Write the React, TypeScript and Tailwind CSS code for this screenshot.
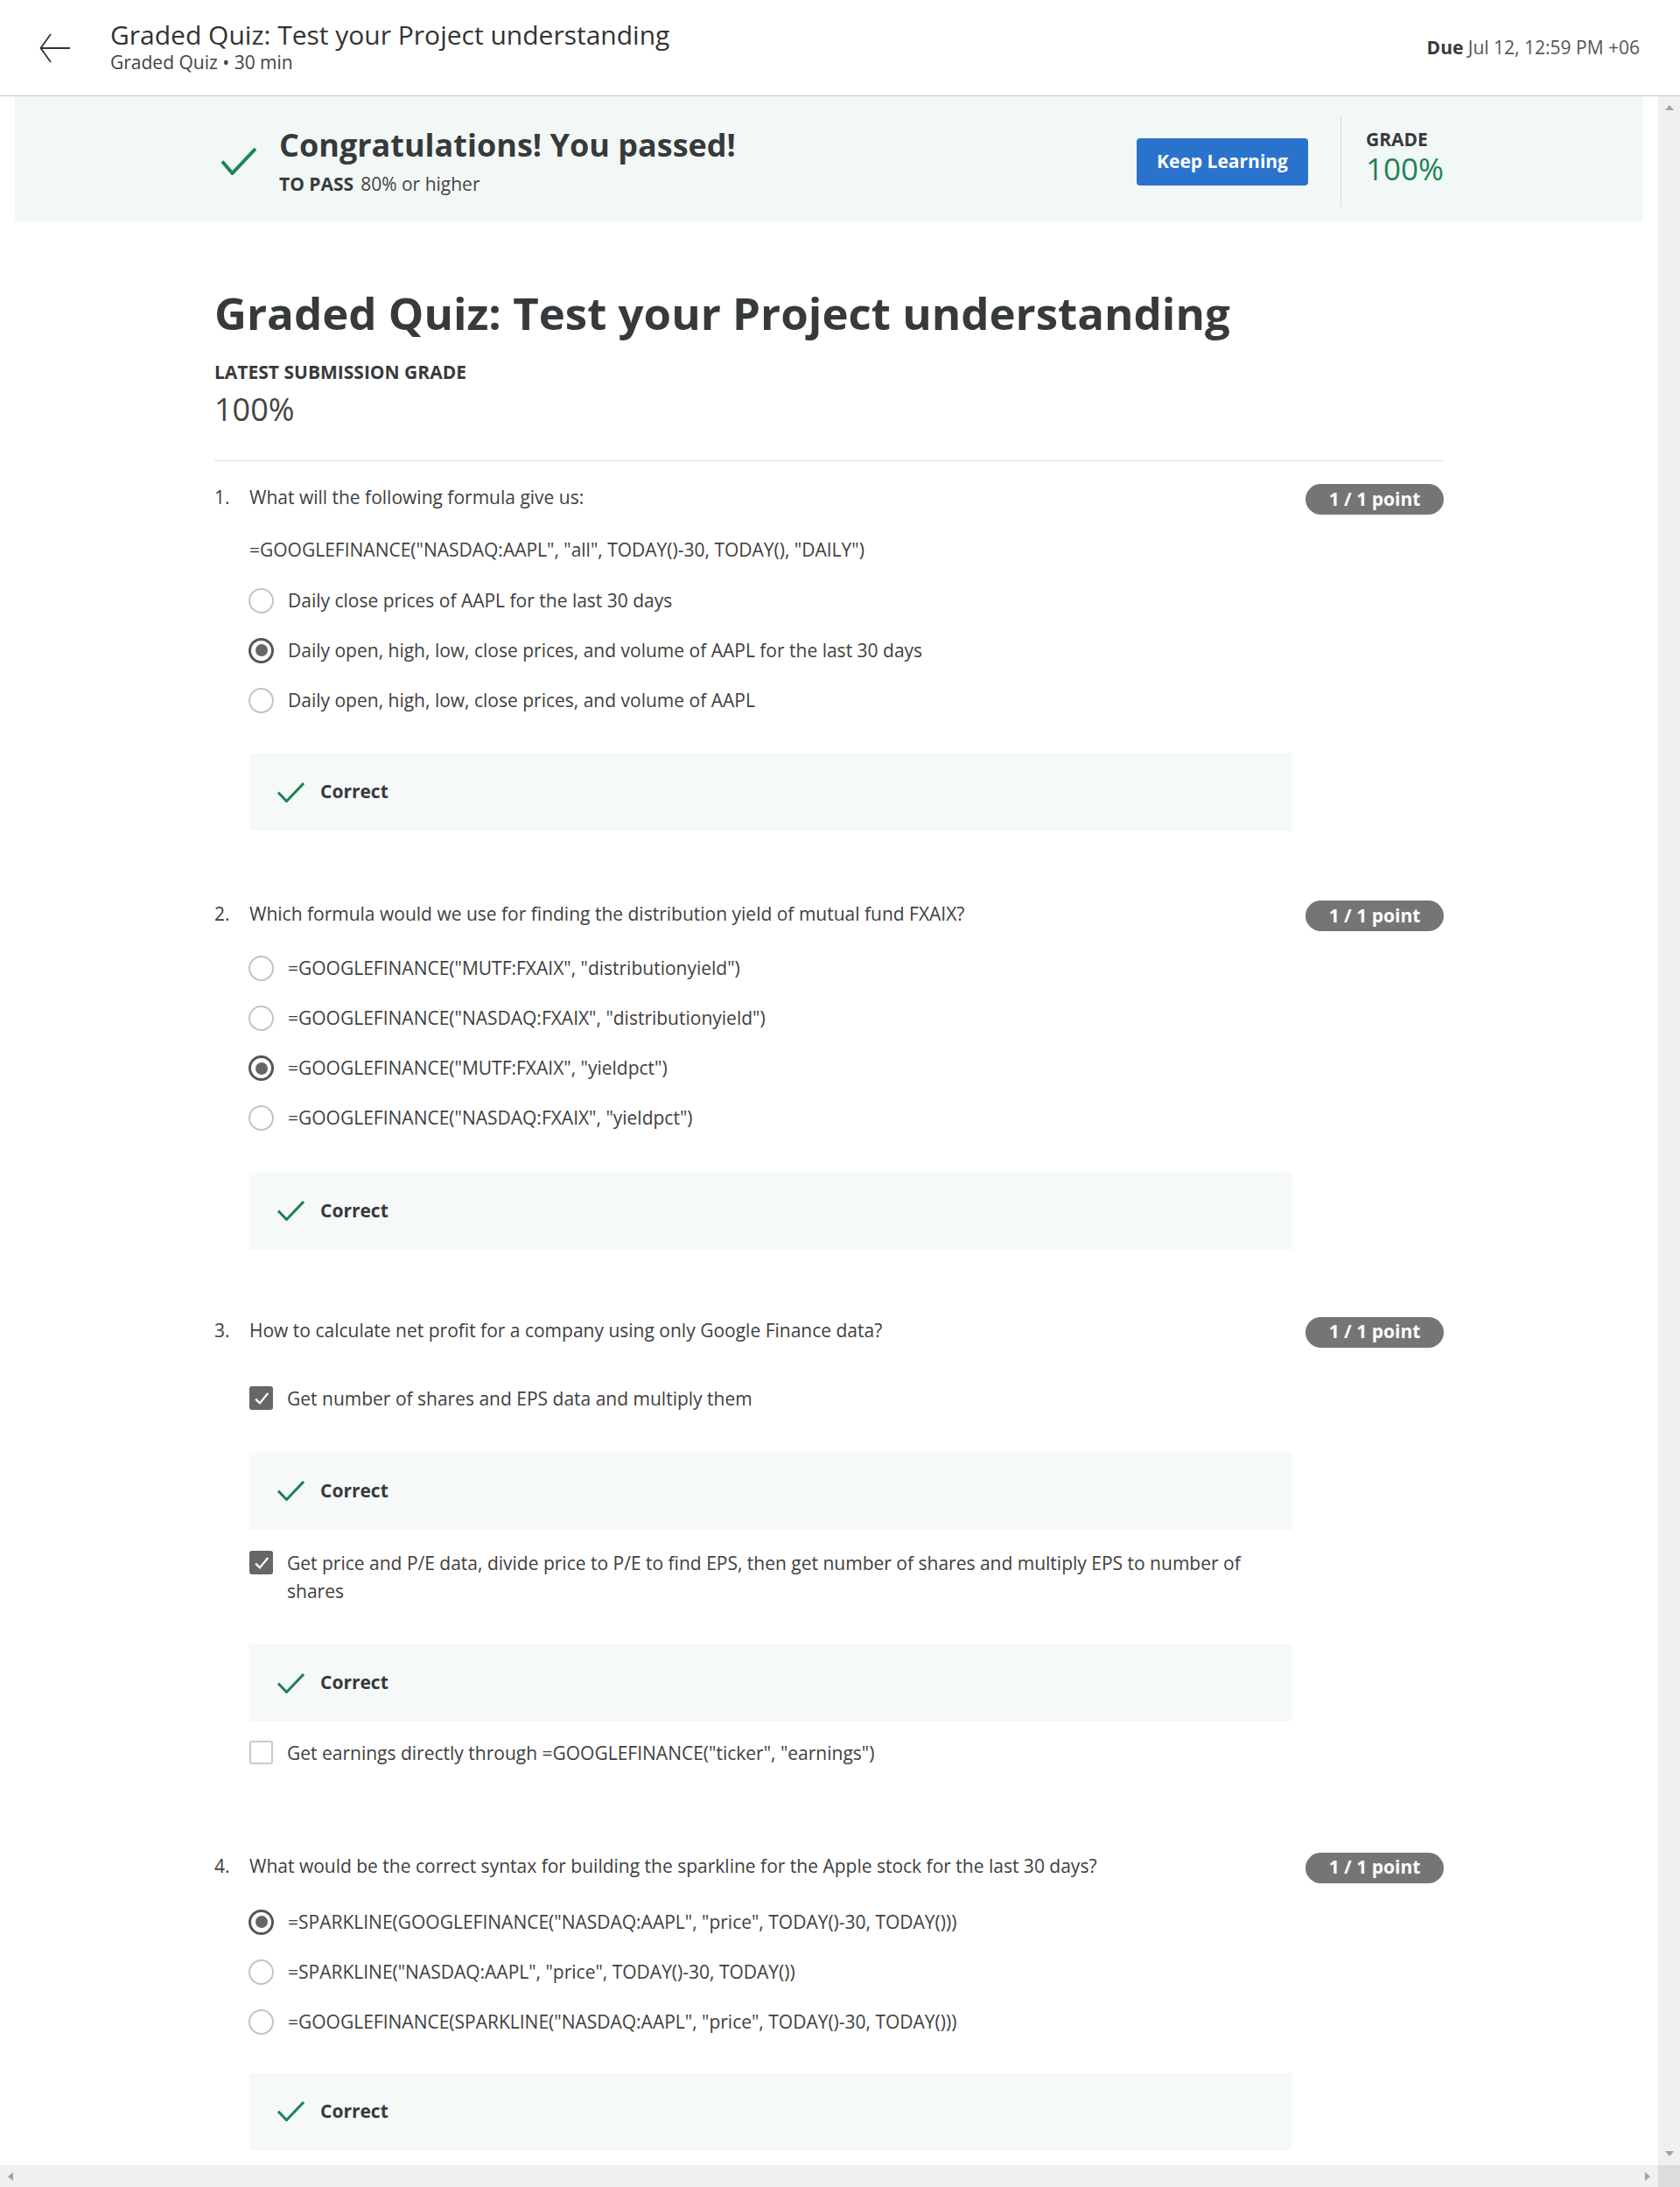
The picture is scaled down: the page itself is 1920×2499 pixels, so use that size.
import type { ReactNode } from 'react'

const GREEN = '#1f8354'

function Tick({ className, width = 3 }: { className?: string; width?: number }) {
  return (
    <svg viewBox="0 0 31 23" className={className} fill="none">
      <path d="M1 11.5 L10.5 21.5 L30 1" stroke={GREEN} strokeWidth={width} />
    </svg>
  )
}

function Radio({ checked }: { checked?: boolean }) {
  if (checked) {
    return (
      <span className="mt-[2px] -ml-[1px] w-[29px] h-[29px] shrink-0 rounded-full border-[3px] border-[#555] flex items-center justify-center">
        <span className="w-[14px] h-[14px] rounded-full bg-[#666]" />
      </span>
    )
  }
  return <span className="mt-[2px] -ml-[1px] w-[29px] h-[29px] shrink-0 rounded-full border-2 border-[#c4c4c4] bg-white" />
}

function Box({ checked }: { checked?: boolean }) {
  if (checked) {
    return (
      <span className="mt-[2.5px] w-[27px] h-[27px] shrink-0 rounded-[3px] bg-[#666] flex items-center justify-center">
        <svg viewBox="0 0 16 16" className="w-[20px] h-[20px]" fill="none">
          <path d="M2.5 8.5 L6.3 12.3 L13.8 3.2" stroke="#fff" strokeWidth="1.8" />
        </svg>
      </span>
    )
  }
  return <span className="mt-[2.5px] w-[27px] h-[27px] shrink-0 rounded-[3px] border-2 border-[#c9c9c9] bg-white" />
}

function Option({ kind, checked, className = '', children }: { kind: 'radio' | 'check'; checked?: boolean; className?: string; children: ReactNode }) {
  return (
    <div className={`flex items-start py-[12.5px] ${className}`}>
      {kind === 'radio' ? <Radio checked={checked} /> : <Box checked={checked} />}
      <span className="ml-[16px] text-[21px] leading-[32px] text-[#404040]">{children}</span>
    </div>
  )
}

function Correct({ className = '' }: { className?: string }) {
  return (
    <div className={`h-[88px] bg-[#f5f9f8] flex items-center pl-[32px] ${className}`}>
      <Tick className="w-[31px] h-[23px]" />
      <span className="ml-[18px] text-[21px] font-bold text-[#373a3c]">Correct</span>
    </div>
  )
}

function Question({ n, text, className = '', children }: { n: number; text: string; className?: string; children: ReactNode }) {
  return (
    <div className={`flex ${className}`}>
      <div className="w-[40px] shrink-0 text-[21px] leading-[32px] text-[#404040]">{n}.</div>
      <div className="w-[1191px] shrink-0">
        <div className="text-[21px] leading-[32px] text-[#404040]">{text}</div>
        {children}
      </div>
      <div className="ml-[16px] mt-[1px] w-[158px] h-[35px] shrink-0 rounded-full bg-[#757575] text-white text-[21px] font-bold flex items-center justify-center">
        1 / 1 point
      </div>
    </div>
  )
}

export default function App() {
  return (
    <div className="w-[1920px] h-[2499px] flex flex-col overflow-hidden bg-white font-['Open_Sans','Noto_Sans',sans-serif] text-[#373a3c]">
      <header className="h-[110px] shrink-0 border-b border-[#c6c6c6] flex items-center pl-[45px] pr-[46px]">
        <svg viewBox="0 0 36 34" className="w-[36px] h-[34px]" fill="none">
          <path d="M35 17 H1.5 M13 1 L1.5 17 L13 33" stroke="#333" strokeWidth="1.8" />
        </svg>
        <div className="ml-[45px] mb-[3px]">
          <div className="text-[30px] leading-[36px] text-[#333]">Graded Quiz: Test your Project understanding</div>
          <div className="text-[21px] leading-[26px] text-[#444]">Graded Quiz • 30 min</div>
        </div>
        <div className="ml-auto text-[21px] text-[#555]">
          <span className="font-bold text-[#373a3c]">Due</span> Jul 12, 12:59 PM +06
        </div>
      </header>

      <div className="flex-1 min-h-0 grid grid-cols-[1fr_25px] grid-rows-[1fr_25px]">
        <main className="overflow-hidden">
          <section className="mx-[17px] h-[143px] bg-[#f2f8f6] flex items-center pt-[6px]">
            <div className="w-[1405px] mx-auto flex items-center">
              <svg viewBox="0 0 40 31" className="ml-[8px] w-[40px] h-[31px]" fill="none">
                <path d="M1 15.5 L12.5 29 L39 1" stroke={GREEN} strokeWidth="4" />
              </svg>
              <div className="ml-[26px]">
                <div className="text-[36px] leading-[44px] font-bold text-[#373a3c]">Congratulations! You passed!</div>
                <div className="mt-[7px] text-[21px] leading-[30px] text-[#444]">
                  <span className="font-bold text-[#373a3c]">TO PASS</span>
                  <span className="ml-[8px]">80% or higher</span>
                </div>
              </div>
              <button className="ml-auto w-[196px] h-[54px] rounded-[4px] bg-[#2a73cc] text-white font-bold text-[21px]">
                Keep Learning
              </button>
              <div className="ml-[37px] w-px h-[102px] bg-[#dadada]" />
              <div className="ml-[28px] mb-[6px]">
                <div className="text-[21px] leading-[22px] font-bold text-[#373a3c]">GRADE</div>
                <div className="text-[35px] leading-[46px] text-[#1f8354]">100%</div>
              </div>
            </div>
          </section>

          <div className="w-[1405px] mx-auto pt-[72px]">
            <h1 className="text-[51px] leading-[65px] font-bold text-[#373a3c]">Graded Quiz: Test your Project understanding</h1>
            <div className="mt-[22px] text-[21px] leading-[26px] font-bold text-[#373a3c]">LATEST SUBMISSION GRADE</div>
            <div className="mt-[8px] text-[36px] leading-[44px] text-[#444]">100%</div>
            <div className="mt-[36px] h-px bg-[#e1e1e1]" />

            <Question n={1} text="What will the following formula give us:" className="mt-[25px]">
              <div className="mt-[28px] text-[21px] leading-[32px] text-[#404040]">
                =GOOGLEFINANCE("NASDAQ:AAPL", "all", TODAY()-30, TODAY(), "DAILY")
              </div>
              <div className="mt-[13px]">
                <Option kind="radio">Daily close prices of AAPL for the last 30 days</Option>
                <Option kind="radio" checked>Daily open, high, low, close prices, and volume of AAPL for the last 30 days</Option>
                <Option kind="radio">Daily open, high, low, close prices, and volume of AAPL</Option>
              </div>
              <Correct className="mt-[33px]" />
            </Question>

            <Question n={2} text="Which formula would we use for finding the distribution yield of mutual fund FXAIX?" className="mt-[79px]">
              <div className="mt-[17.5px]">
                <Option kind="radio">=GOOGLEFINANCE("MUTF:FXAIX", "distributionyield")</Option>
                <Option kind="radio">=GOOGLEFINANCE("NASDAQ:FXAIX", "distributionyield")</Option>
                <Option kind="radio" checked>=GOOGLEFINANCE("MUTF:FXAIX", "yieldpct")</Option>
                <Option kind="radio">=GOOGLEFINANCE("NASDAQ:FXAIX", "yieldpct")</Option>
              </div>
              <Correct className="mt-[34px]" />
            </Question>

            <Question n={3} text="How to calculate net profit for a company using only Google Finance data?" className="mt-[76px]">
              <Option kind="check" checked className="mt-[33.5px]">Get number of shares and EPS data and multiply them</Option>
              <Correct className="mt-[33.5px]" />
              <Option kind="check" checked className="mt-[9.5px]">
                Get price and P/E data, divide price to P/E to find EPS, then get number of shares and multiply EPS to number of shares
              </Option>
              <Correct className="mt-[33px]" />
              <Option kind="check" className="mt-[7px]">Get earnings directly through =GOOGLEFINANCE("ticker", "earnings")</Option>
            </Question>

            <Question n={4} text="What would be the correct syntax for building the sparkline for the Apple stock for the last 30 days?" className="mt-[84.5px]">
              <div className="mt-[19.5px]">
                <Option kind="radio" checked>=SPARKLINE(GOOGLEFINANCE("NASDAQ:AAPL", "price", TODAY()-30, TODAY()))</Option>
                <Option kind="radio">=SPARKLINE("NASDAQ:AAPL", "price", TODAY()-30, TODAY())</Option>
                <Option kind="radio">=GOOGLEFINANCE(SPARKLINE("NASDAQ:AAPL", "price", TODAY()-30, TODAY()))</Option>
              </div>
              <Correct className="mt-[30.5px]" />
            </Question>
          </div>
        </main>

        <div className="bg-[#f0f0f0] flex flex-col items-center justify-between py-[10px]">
          <svg viewBox="0 0 10 6" className="w-[10px] h-[6px]"><path d="M0 6 L5 0 L10 6 Z" fill="#a3a3a3" /></svg>
          <svg viewBox="0 0 10 6" className="w-[10px] h-[6px]"><path d="M0 0 L10 0 L5 6 Z" fill="#a3a3a3" /></svg>
        </div>
        <div className="bg-[#f0f0f0] flex items-center justify-between px-[9px]">
          <svg viewBox="0 0 6 10" className="w-[6px] h-[10px]"><path d="M6 0 L6 10 L0 5 Z" fill="#a3a3a3" /></svg>
          <svg viewBox="0 0 6 10" className="w-[6px] h-[10px]"><path d="M0 0 L6 5 L0 10 Z" fill="#a3a3a3" /></svg>
        </div>
        <div className="bg-[#dcdcdc]" />
      </div>
    </div>
  )
}
